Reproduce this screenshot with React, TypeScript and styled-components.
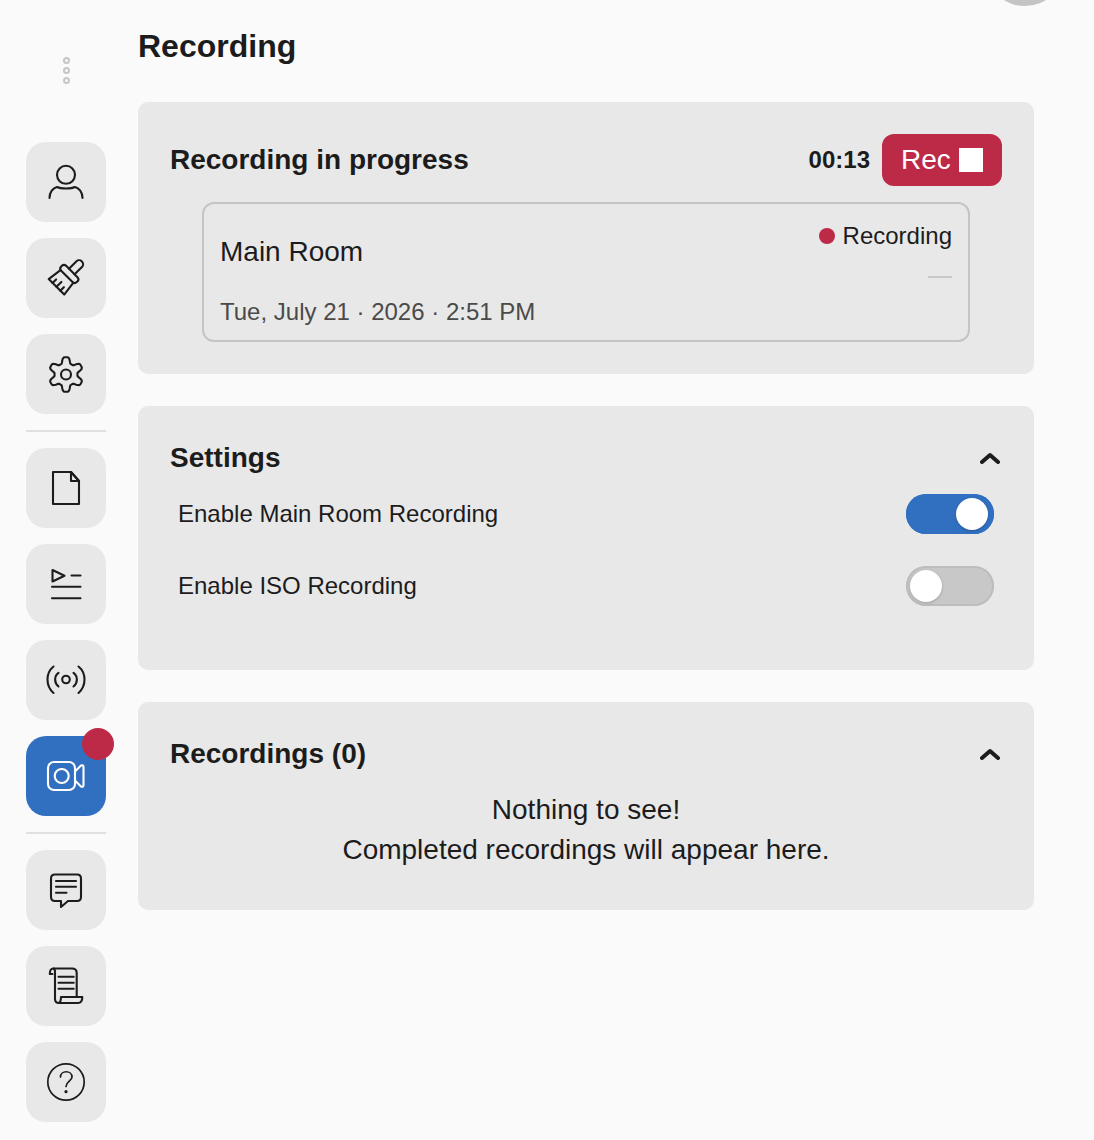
import React, { useState } from "react";
import styled, { createGlobalStyle } from "styled-components";

const GlobalStyle = createGlobalStyle`
  html, body {
    margin: 0;
    padding: 0;
    background: #fafafa;
  }
  body {
    font-family: "Liberation Sans", Arial, sans-serif;
    color: #1c1c1c;
    overflow: hidden;
  }
`;

const Page = styled.div`
  position: relative;
  display: flex;
  width: 1094px;
  height: 1140px;
  overflow: hidden;
`;

const Avatar = styled.div`
  position: absolute;
  top: -74px;
  left: 985px;
  width: 80px;
  height: 80px;
  border-radius: 50%;
  background: #c4c4c4;
`;

const Sidebar = styled.nav`
  display: flex;
  flex-direction: column;
  align-items: center;
  flex: none;
  box-sizing: border-box;
  width: 132px;
  padding-top: 57px;
  gap: 16px;
`;

const Grip = styled.div`
  display: flex;
  flex-direction: column;
  gap: 3px;
  margin-bottom: 42px;

  span {
    box-sizing: border-box;
    width: 7px;
    height: 7px;
    border-radius: 50%;
    border: 2px solid #c6c6c6;
  }
`;

const NavButton = styled.button<{ $active?: boolean }>`
  position: relative;
  display: flex;
  align-items: center;
  justify-content: center;
  flex: none;
  width: 80px;
  height: 80px;
  padding: 0;
  border: 0;
  border-radius: 20px;
  background: ${p => (p.$active ? "#3170c0" : "#e8e8e8")};
  color: ${p => (p.$active ? "#ffffff" : "#1c1c1c")};

  svg {
    display: block;
  }
`;

const Badge = styled.span`
  position: absolute;
  top: -8px;
  right: -8px;
  width: 32px;
  height: 32px;
  border-radius: 50%;
  background: #bd2a47;
`;

const Divider = styled.div`
  width: 80px;
  height: 2px;
  background: #e0e0e0;
`;

const Main = styled.main`
  box-sizing: border-box;
  width: 896px;
  margin-left: 6px;
  padding-top: 28px;
  display: flex;
  flex-direction: column;
  gap: 32px;
`;

const PageTitle = styled.h1`
  margin: 0 0 6px;
  font-size: 32px;
  line-height: 36px;
  font-weight: 700;
`;

const Card = styled.section`
  box-sizing: border-box;
  padding: 32px;
  border-radius: 10px;
  background: #e8e8e8;
  display: flex;
  flex-direction: column;
  gap: 16px;
`;

const CardHeader = styled.div<{ $height: number }>`
  display: flex;
  align-items: center;
  justify-content: space-between;
  height: ${p => p.$height}px;

  > svg {
    margin-right: 2px;
  }
`;

const CardTitle = styled.h2`
  margin: 0;
  font-size: 28px;
  line-height: 40px;
  font-weight: 700;
`;

const RecControls = styled.div`
  display: flex;
  align-items: center;
  gap: 12px;
`;

const Timer = styled.span`
  font-size: 24px;
  font-weight: 700;
`;

const RecButton = styled.button`
  display: flex;
  align-items: center;
  gap: 8px;
  box-sizing: border-box;
  width: 120px;
  height: 52px;
  padding: 0 19px;
  border: 0;
  border-radius: 12px;
  background: #bd2a47;
  color: #fff;
  font-family: inherit;
  font-size: 28px;
`;

const StopSquare = styled.span`
  width: 24px;
  height: 24px;
  background: #fff;
`;

const SessionBox = styled.div`
  box-sizing: border-box;
  display: flex;
  justify-content: space-between;
  height: 140px;
  margin: 0 32px;
  padding: 16px 16px 13px;
  border: 2px solid #c4c4c4;
  border-radius: 12px;
`;

const SessionInfo = styled.div`
  display: flex;
  flex-direction: column;
  justify-content: space-between;
  padding-top: 15px;
`;

const RoomName = styled.div`
  font-size: 28px;
  line-height: 34px;
`;

const SessionDate = styled.div`
  font-size: 24px;
  line-height: 30px;
  color: #4a4a4a;
`;

const SessionStatus = styled.div`
  display: flex;
  flex-direction: column;
  align-items: flex-end;
  gap: 24px;
`;

const StatusLabel = styled.div`
  display: flex;
  align-items: center;
  gap: 8px;
  font-size: 24px;
  line-height: 32px;
`;

const StatusDot = styled.span`
  width: 16px;
  height: 16px;
  border-radius: 50%;
  background: #bd2a47;
`;

const Dash = styled.span`
  width: 24px;
  height: 2px;
  background: #c8c8c8;
`;

const Rows = styled.div`
  display: flex;
  flex-direction: column;
  gap: 32px;
  margin-bottom: 32px;
  padding: 0 8px;
`;

const Row = styled.div`
  display: flex;
  align-items: center;
  justify-content: space-between;
  height: 40px;
  font-size: 24px;
`;

const Track = styled.button<{ $on: boolean }>`
  position: relative;
  flex: none;
  width: 88px;
  height: 40px;
  padding: 0;
  border: 0;
  border-radius: 20px;
  background: ${p => (p.$on ? "#3170c0" : "#c8c8c8")};
  box-shadow: inset 0 0 0 2px ${p => (p.$on ? "#3170c0" : "#bdbdbd")};
`;

const Knob = styled.span<{ $on: boolean }>`
  position: absolute;
  top: 4px;
  left: ${p => (p.$on ? "50px" : "4px")};
  width: 32px;
  height: 32px;
  border-radius: 50%;
  background: #fff;
  box-shadow: 0 1px 3px rgba(0, 0, 0, 0.2);
`;

const Empty = styled.div`
  text-align: center;
  font-size: 28px;
  line-height: 40px;
  margin-bottom: 8px;
`;

// six broad lobes, pointing up and down like the reference gear
const gearPath = () => {
  const pts: string[] = [];
  for (let i = 0; i < 144; i++) {
    const t = (i / 144) * Math.PI * 2;
    const r = 14.4 + 3.4 * Math.cos(6 * t) - 0.5 * Math.cos(18 * t);
    const x = 20 + r * Math.sin(t);
    const y = 20.5 - r * Math.cos(t);
    pts.push(`${x.toFixed(2)} ${y.toFixed(2)}`);
  }
  return `M${pts.join(" L")} Z`;
};

const Icon = ({ children }: { children: React.ReactNode }) => (
  <svg width="40" height="40" viewBox="0 0 40 40" fill="none" stroke="currentColor" strokeWidth="2.1" strokeLinecap="round" strokeLinejoin="round">
    {children}
  </svg>
);

const Chevron = () => (
  <svg width="20" height="12" viewBox="0 0 20 12" fill="none" stroke="#1c1c1c" strokeWidth="4" strokeLinecap="round" strokeLinejoin="round">
    <path d="M2 10 L10 3 L18 10" />
  </svg>
);

const Toggle = ({ initial }: { initial: boolean }) => {
  const [on, setOn] = useState(initial);
  return (
    <Track $on={on} onClick={() => setOn(!on)}>
      <Knob $on={on} />
    </Track>
  );
};

const App = () => (
  <Page>
    <GlobalStyle />
    <Avatar />
    <Sidebar>
      <Grip>
        <span />
        <span />
        <span />
      </Grip>
      <NavButton>
        <Icon>
          <circle cx="20" cy="12.8" r="9" />
          <path d="M3.5 36 C3.5 30 7 26 11 25 C15 27 25 27 29 25 C33 26 36.5 30 36.5 36" />
        </Icon>
      </NavButton>
      <NavButton>
        <Icon>
          <g transform="rotate(45 20 20)">
            <path d="M15.5 11.3 V1 a4 4 0 0 1 8 0 V11.3" />
            <rect x="8.5" y="11.3" width="22" height="7" rx="3" />
            <path d="M10.5 18.3 L8.5 33 H30.5 L28.5 18.3" />
            <path d="M14 33 V28 M19.5 33 V26 M25 33 V28" />
          </g>
        </Icon>
      </NavButton>
      <NavButton>
        <Icon>
          <path d={gearPath()} />
          <circle cx="20" cy="20.5" r="5" />
        </Icon>
      </NavButton>
      <Divider />
      <NavButton>
        <Icon>
          <path d="M7 4 H25 L33 13 V36 H7 Z" />
          <path d="M25 4 V13 H33 Z" />
        </Icon>
      </NavButton>
      <NavButton>
        <Icon>
          <path d="M6.5 6 V17.5 L18.5 11.7 Z" />
          <path d="M25.5 11.5 H34.5 M6 22.7 H34.5 M6 34.3 H34.5" />
        </Icon>
      </NavButton>
      <NavButton>
        <Icon>
          <circle cx="20" cy="19.5" r="3.8" />
          <path d="M12.5 12.8 C8 16 8 23 12.5 26.5 M27.5 12.8 C32 16 32 23 27.5 26.5" />
          <path d="M7.5 6.5 C-0.5 13 -0.5 26 7.5 33 M32.5 6.5 C40.5 13 40.5 26 32.5 33" />
        </Icon>
      </NavButton>
      <NavButton $active>
        <Icon>
          <rect x="2" y="6" width="27" height="28" rx="6" />
          <circle cx="15.7" cy="20" r="7" />
          <path d="M29.5 15 L35 9.5 Q37.5 8.5 37.5 11 V29 Q37.5 31.5 35 30.5 L29.5 25" />
        </Icon>
        <Badge />
      </NavButton>
      <Divider />
      <NavButton>
        <Icon>
          <path d="M9 4.5 H31 Q35 4.5 35 8.5 V27 Q35 31 31 31 H22 L15 37 V31 H9 Q5 31 5 27 V8.5 Q5 4.5 9 4.5 Z" />
          <path d="M10 11 H30 M10 16.7 H30 M10 22.7 H20.5" />
        </Icon>
      </NavButton>
      <NavButton>
        <Icon>
          <path d="M6.5 8 H3.8 C3.8 4 5 2.5 7.5 2.5 H26 Q30.7 2.5 30.7 7 V31" />
          <path d="M7.5 2.5 Q9 3 9 6 V33 Q9 37 13 37 H32 Q36.3 37 36.3 31 H15 Q15 37 12 37" />
          <path d="M12.5 10.7 H27.7 M12.5 16.7 H27.7 M12.5 22.7 H27.7" />
        </Icon>
      </NavButton>
      <NavButton>
        <Icon>
          <circle cx="20" cy="20" r="18.2" strokeWidth="1.7" />
          <path d="M14.5 15 C14.5 8 26 8 26 15 C26 19 20 19.5 20 24.5" strokeWidth="1.7" />
          <circle cx="20" cy="29.7" r="1.6" fill="currentColor" stroke="none" />
        </Icon>
      </NavButton>
    </Sidebar>
    <Main>
      <PageTitle>Recording</PageTitle>
      <Card>
        <CardHeader $height={52}>
          <CardTitle>Recording in progress</CardTitle>
          <RecControls>
            <Timer>00:13</Timer>
            <RecButton>
              Rec
              <StopSquare />
            </RecButton>
          </RecControls>
        </CardHeader>
        <SessionBox>
          <SessionInfo>
            <RoomName>Main Room</RoomName>
            <SessionDate>Tue, July 21 · 2026 · 2:51 PM</SessionDate>
          </SessionInfo>
          <SessionStatus>
            <StatusLabel>
              <StatusDot />
              Recording
            </StatusLabel>
            <Dash />
          </SessionStatus>
        </SessionBox>
      </Card>
      <Card>
        <CardHeader $height={40}>
          <CardTitle>Settings</CardTitle>
          <Chevron />
        </CardHeader>
        <Rows>
          <Row>
            Enable Main Room Recording
            <Toggle initial={true} />
          </Row>
          <Row>
            Enable ISO Recording
            <Toggle initial={false} />
          </Row>
        </Rows>
      </Card>
      <Card>
        <CardHeader $height={40}>
          <CardTitle>Recordings (0)</CardTitle>
          <Chevron />
        </CardHeader>
        <Empty>
          Nothing to see!
          <br />
          Completed recordings will appear here.
        </Empty>
      </Card>
    </Main>
  </Page>
);

export default App;
